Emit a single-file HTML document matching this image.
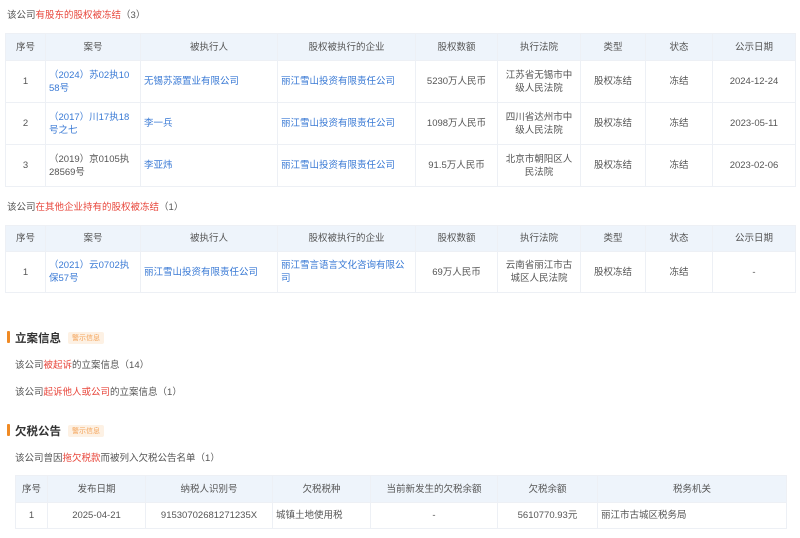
<!DOCTYPE html>
<html><head><meta charset="utf-8"><style>
*{margin:0;padding:0;box-sizing:border-box}
body{width:800px;height:538px;background:#fff;font-family:"Liberation Sans","Noto Sans CJK SC",sans-serif;font-size:9.5px;color:#555;position:relative;overflow:hidden}
.a{position:absolute;white-space:nowrap}
.r{color:#e8473c}
.b{color:#3a7ad5}
table{position:absolute;border-collapse:collapse;table-layout:fixed}
td,th{border:1px solid #edf0f5;text-align:center;vertical-align:middle;font-weight:normal;line-height:13px;padding:0 3px}
th{background:#eef4fb;color:#555}
td.l{text-align:left}
.h{position:absolute;font-weight:bold;font-size:11px;color:#333;padding-left:8px}
.h:before{content:"";position:absolute;left:0;top:1px;width:3px;height:12px;background:#f08a24;border-radius:1px}
.tag{position:absolute;font-size:7px;color:#f4a45a;background:#fdf1e4;padding:1px 4px;border-radius:2px}
</style></head><body>
<div class="a" style="left:7px;top:7px">该公司<span class="r">有股东的股权被冻结</span>（3）</div>
<table style="left:5px;top:33px;width:790px">
<colgroup><col style="width:40px"><col style="width:95px"><col style="width:137px"><col style="width:138px"><col style="width:82px"><col style="width:83px"><col style="width:65px"><col style="width:67px"><col style="width:83px"></colgroup>
<tr style="height:27px"><th>序号</th><th>案号</th><th>被执行人</th><th>股权被执行的企业</th><th>股权数额</th><th>执行法院</th><th>类型</th><th>状态</th><th>公示日期</th></tr>
<tr style="height:42px"><td>1</td><td class="l b">（2024）苏02执10<br>58号</td><td class="l b">无锡苏源置业有限公司</td><td class="l b">丽江雪山投资有限责任公司</td><td>5230万人民币</td><td>江苏省无锡市中<br>级人民法院</td><td>股权冻结</td><td>冻结</td><td>2024-12-24</td></tr>
<tr style="height:42px"><td>2</td><td class="l b">（2017）川17执18<br>号之七</td><td class="l b">李一兵</td><td class="l b">丽江雪山投资有限责任公司</td><td>1098万人民币</td><td>四川省达州市中<br>级人民法院</td><td>股权冻结</td><td>冻结</td><td>2023-05-11</td></tr>
<tr style="height:42px"><td>3</td><td class="l">（2019）京0105执<br>28569号</td><td class="l b">李亚炜</td><td class="l b">丽江雪山投资有限责任公司</td><td>91.5万人民币</td><td>北京市朝阳区人<br>民法院</td><td>股权冻结</td><td>冻结</td><td>2023-02-06</td></tr>
</table>
<div class="a" style="left:7px;top:199px">该公司<span class="r">在其他企业持有的股权被冻结</span>（1）</div>
<table style="left:5px;top:225px;width:790px">
<colgroup><col style="width:40px"><col style="width:95px"><col style="width:137px"><col style="width:138px"><col style="width:82px"><col style="width:83px"><col style="width:65px"><col style="width:67px"><col style="width:83px"></colgroup>
<tr style="height:26px"><th>序号</th><th>案号</th><th>被执行人</th><th>股权被执行的企业</th><th>股权数额</th><th>执行法院</th><th>类型</th><th>状态</th><th>公示日期</th></tr>
<tr style="height:41px"><td>1</td><td class="l b">（2021）云0702执<br>保57号</td><td class="l b">丽江雪山投资有限责任公司</td><td class="l b">丽江雪言语言文化咨询有限公<br>司</td><td>69万人民币</td><td>云南省丽江市古<br>城区人民法院</td><td>股权冻结</td><td>冻结</td><td>-</td></tr>
</table>
<div class="h" style="left:7px;top:330px;font-size:11.5px">立案信息</div>
<div class="tag" style="left:68px;top:332px">警示信息</div>
<div class="a" style="left:15px;top:357px">该公司<span class="r">被起诉</span>的立案信息（14）</div>
<div class="a" style="left:15px;top:384px">该公司<span class="r">起诉他人或公司</span>的立案信息（1）</div>
<div class="h" style="left:7px;top:423px;font-size:11.5px">欠税公告</div>
<div class="tag" style="left:68px;top:425px">警示信息</div>
<div class="a" style="left:15px;top:450px">该公司曾因<span class="r">拖欠税款</span>而被列入欠税公告名单（1）</div>
<table style="left:15px;top:475px;width:771px">
<colgroup><col style="width:32px"><col style="width:98px"><col style="width:127px"><col style="width:98px"><col style="width:127px"><col style="width:100px"><col style="width:189px"></colgroup>
<tr style="height:27px"><th>序号</th><th>发布日期</th><th>纳税人识别号</th><th>欠税税种</th><th>当前新发生的欠税余额</th><th>欠税余额</th><th>税务机关</th></tr>
<tr style="height:26px"><td>1</td><td>2025-04-21</td><td>91530702681271235X</td><td class="l">城镇土地使用税</td><td>-</td><td>5610770.93元</td><td class="l">丽江市古城区税务局</td></tr>
</table>
</body></html>
